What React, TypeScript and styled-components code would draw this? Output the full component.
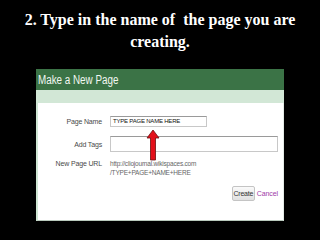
import React from "react";
import styled, { createGlobalStyle } from "styled-components";

const Global = createGlobalStyle`
  html, body {
    margin: 0;
    padding: 0;
    background: #000;
  }
  body {
    width: 320px;
    height: 240px;
    overflow: hidden;
  }
`;

const Slide = styled.div`
  width: 320px;
  height: 240px;
  background: #000;
  display: flex;
  flex-direction: column;
  align-items: center;
`;

const Title = styled.h1`
  margin: 9px 0 0;
  width: 300px;
  color: #fff;
  font-family: "Liberation Serif", "DejaVu Serif", serif;
  font-weight: bold;
  font-size: 16px;
  line-height: 22px;
  text-align: center;
`;

const Panel = styled.div`
  position: relative;
  margin-top: 16px;
  width: 248px;
  height: 152px;
  display: flex;
  flex-direction: column;
  background: #fff;
  font-family: "Liberation Sans", Arial, sans-serif;
`;

const Header = styled.div`
  height: 21px;
  background: #3b7346;
  color: #f2f8f2;
  padding-left: 2px;
  display: flex;
  align-items: center;
`;

const HeaderText = styled.span`
  display: inline-block;
  font-size: 12px;
  transform: scaleX(0.82);
  transform-origin: left center;
  white-space: nowrap;
`;

const Band = styled.div`
  height: 13px;
  background: #d2e7d6;
`;

const Body = styled.div`
  flex: 1;
  border-left: 2px solid #cfe5d4;
  border-bottom: 1px solid #b9c9bc;
  border-right: 1px solid #e4ece6;
  padding: 13px 5px 0 0;
  display: flex;
  flex-direction: column;
`;

const Row = styled.div<{ $gap?: number; $top?: boolean }>`
  display: grid;
  grid-template-columns: 64px 1fr;
  column-gap: 8px;
  align-items: ${(p) => (p.$top ? "start" : "center")};
  margin-top: ${(p) => p.$gap ?? 0}px;
`;

const Label = styled.div`
  text-align: right;
  white-space: nowrap;
  font-size: 7px;
  line-height: 9px;
  color: #4a4a4a;
  letter-spacing: -0.15px;
`;

const Input = styled.div<{ $w?: number; $h: number }>`
  box-sizing: border-box;
  width: ${(p) => (p.$w ? `${p.$w}px` : "100%")};
  height: ${(p) => p.$h}px;
  border: 1px solid #c8c8c8;
  border-top-color: #9a9a9a;
  background: #fff;
  font-size: 6px;
  line-height: ${(p) => p.$h - 2}px;
  padding-left: 2px;
  color: #111;
  letter-spacing: -0.2px;
  white-space: nowrap;
`;

const Url = styled.div`
  font-size: 6.5px;
  line-height: 9px;
  color: #666;
  letter-spacing: -0.2px;
`;

const Actions = styled.div`
  display: flex;
  justify-content: flex-end;
  align-items: center;
  gap: 2px;
  margin-top: 9px;
`;

const Button = styled.div`
  box-sizing: border-box;
  width: 23px;
  height: 15px;
  border: 1px solid #c4c4c4;
  border-radius: 2px;
  background: linear-gradient(#fafafa, #e0e0e0);
  font-size: 7px;
  line-height: 13px;
  text-align: center;
  color: #333;
  letter-spacing: -0.2px;
`;

const CancelLink = styled.span`
  font-size: 7px;
  color: #a03aa8;
  letter-spacing: -0.1px;
`;

const Arrow = styled.svg`
  position: absolute;
  left: 110px;
  top: 60px;
`;

export default function App() {
  return (
    <>
      <Global />
      <Slide>
        <Title>
          2. Type in the name of&nbsp; the page you are creating.
        </Title>
        <Panel>
          <Header>
            <HeaderText>Make a New Page</HeaderText>
          </Header>
          <Band />
          <Body>
            <Row>
              <Label>Page Name</Label>
              <Input $w={97} $h={11}>
                TYPE PAGE NAME HERE
              </Input>
            </Row>
            <Row $gap={9}>
              <Label>Add Tags</Label>
              <Input $h={16} />
            </Row>
            <Row $gap={7} $top>
              <Label>New Page URL</Label>
              <Url>
                http://cliojournal.wikispaces.com
                <br />
                /TYPE+PAGE+NAME+HERE
              </Url>
            </Row>
            <Actions>
              <Button>Create</Button>
              <CancelLink>Cancel</CancelLink>
            </Actions>
          </Body>
          <Arrow width="14" height="32" viewBox="0 0 14 32">
            <path
              d="M7 1 L13 9 L9.5 9 L9.5 31 L4.5 31 L4.5 9 L1 9 Z"
              fill="#e3101a"
              stroke="#6a1010"
              strokeWidth="0.8"
              strokeLinejoin="round"
            />
          </Arrow>
        </Panel>
      </Slide>
    </>
  );
}
